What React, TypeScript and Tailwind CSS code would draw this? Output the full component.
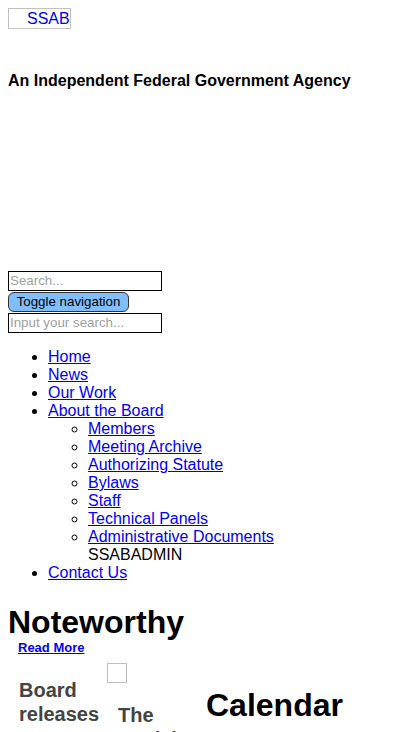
import React from "react";

const F = { fontFamily: '"Liberation Sans", Arial, sans-serif' };

export default function App() {
  const sub = [
    "Members",
    "Meeting Archive",
    "Authorizing Statute",
    "Bylaws",
    "Staff",
    "Technical Panels",
    "Administrative Documents",
  ];
  return (
    <div className="bg-white text-black p-2 h-[732px] overflow-hidden" style={F}>
      <div className="w-[63px] h-[21px] border border-[#c0c0c0] pl-[18px] text-[16px] leading-[19px] text-[#0000ee]">
        SSAB
      </div>
      <div className="mt-[43px] text-[16px] font-bold leading-[18px]">
        An Independent Federal Government Agency
      </div>
      <div className="mt-[181px] flex flex-col gap-[1px]">
        <div className="w-[154px] h-[20px] border border-black px-[1px] text-[13.33px] leading-[18px] text-[#a0a0a0]">
          Search...
        </div>
        <div className="w-[121px] h-[20px] border border-[#333] rounded-[6px] bg-[#80bfff] text-[13.33px] leading-[18px] text-center">
          Toggle navigation
        </div>
        <div className="w-[154px] h-[20px] border border-black px-[1px] text-[13.33px] leading-[18px] text-[#a0a0a0]">
          Input your search...
        </div>
      </div>
      <ul className="mt-[15px] pl-[40px] list-disc text-[16px] leading-[18px]">
        <li><a className="text-[#0000ee] underline">Home</a></li>
        <li><a className="text-[#0000ee] underline">News</a></li>
        <li><a className="text-[#0000ee] underline">Our Work</a></li>
        <li>
          <a className="text-[#0000ee] underline">About the Board</a>
          <ul className="pl-[40px] list-[circle]">
            {sub.map((s) => (
              <li key={s}><a className="text-[#0000ee] underline">{s}</a></li>
            ))}
          </ul>
          <div className="pl-[40px]">SSABADMIN</div>
        </li>
        <li><a className="text-[#0000ee] underline">Contact Us</a></li>
      </ul>
      <div className="mt-[22px] text-[32px] font-bold leading-[37px]">Noteworthy</div>
      <div className="pl-[10px] text-[13px] font-bold leading-[14px]">
        <a className="text-[#0000ee] underline">Read More</a>
      </div>
      <div className="flex items-start mt-[8px]">
        <div className="ml-[11px] w-[88px] mt-[15px] text-[20px] font-bold leading-[24px] text-[#444]">
          Board releases
        </div>
        <div className="w-[99px]">
          <div className="w-[20px] h-[20px] border border-[#c0c0c0]" />
          <div className="ml-[11px] mt-[20px] text-[20px] font-bold leading-[24px] text-[#444]">
            The
            <br />
            Social
          </div>
        </div>
        <div className="mt-[24px] text-[32px] font-bold leading-[37px]">Calendar</div>
      </div>
    </div>
  );
}
